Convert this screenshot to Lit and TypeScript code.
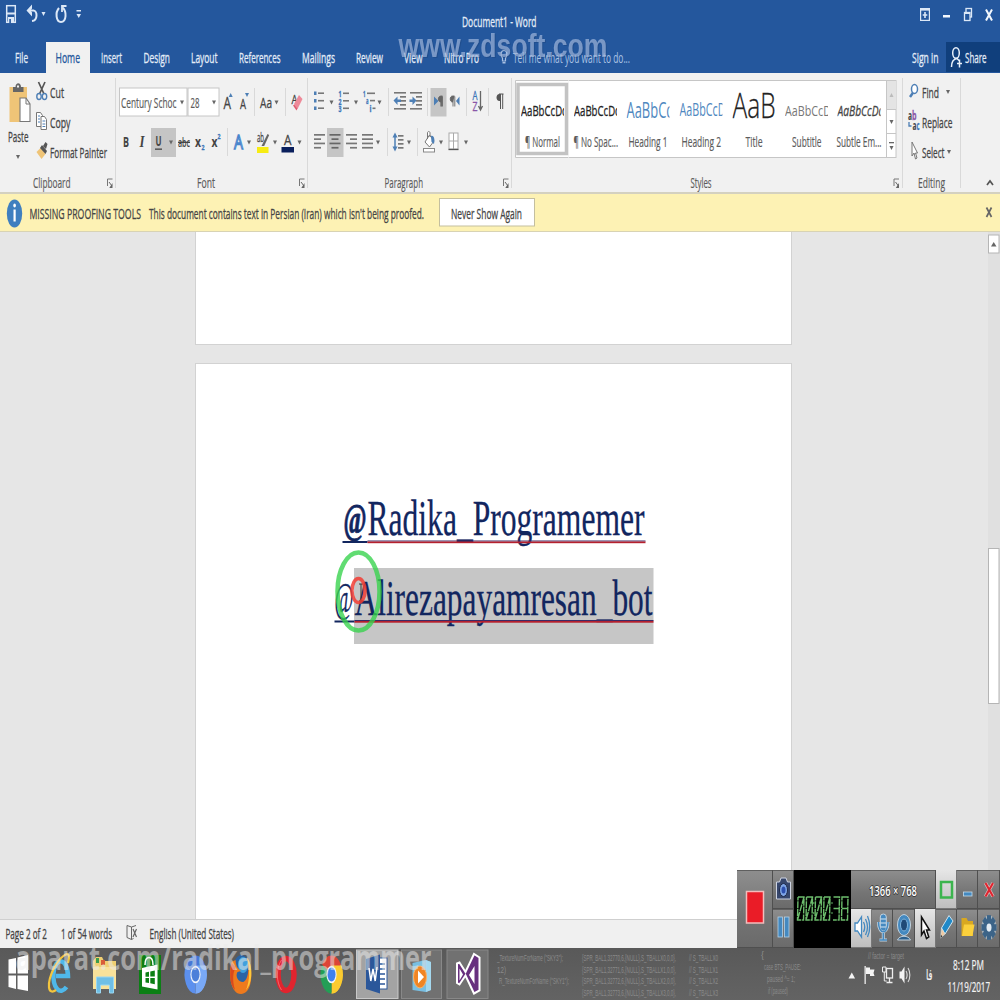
import { LitElement, html, svg, css } from "lit";
import { customElement } from "lit/decorators.js";

/* A cell spans x0..x1 / y0..y1 in window units; cells placed side by side form a row. */
const cell = (x0: number, x1: number, y0: number, y1: number, body: unknown, cls = "") =>
  html`<svg class=${cls} width=${x1 - x0} height=${y1 - y0} viewBox="${x0} ${y0} ${x1 - x0} ${y1 - y0}">${body}</svg>`;

/* Condensed text: starts at x, sits on baseline y, fills width w. */
const tx = (s: string, x: number, y: number, w: number, size = 15, cls = "") =>
  svg`<text class=${cls} x=${x} y=${y} font-size=${size} textLength=${w} lengthAdjust="spacingAndGlyphs">${s}</text>`;

const P = (d: string, fill = "none", stroke = "none", sw = 1) =>
  svg`<path d=${d} fill=${fill} stroke=${stroke} stroke-width=${sw}/>`;
const R = (x: number, y: number, w: number, h: number, fill: string, stroke = "none", sw = 1) =>
  svg`<rect x=${x} y=${y} width=${w} height=${h} fill=${fill} stroke=${stroke} stroke-width=${sw}/>`;
const drop = (x: number, y: number, c = "#666") => P(`M${x - 2} ${y - 2}h4l-2 4z`, c);
const vsep = (x: number, y0: number, y1: number) => R(x, y0, 1, y1 - y0, "#d9d9d9");
const lines = (x: number, y: number, ws: number[], offs: number[] = [], c = "#777", step = 4.4) =>
  ws.map((w, i) => R(x + (offs[i] ?? 0), y + i * step, w, 1.7, c));
const launcher = (x: number, y: number) =>
  svg`${P(`M${x + .5} ${y + 7}v-7h5`, "none", "#777", 1)}${P(`M${x + 2} ${y + 3}l3 4`, "none", "#666", 1)}${P(`M${x + 5.5} ${y + 4}v5h-3.2z`, "#666")}`;

const tabs: [string, number, number, number, number][] = [
  ["File", 0, 46, 15, 13], ["Home", 46, 90, 55.5, 24.5], ["Insert", 90, 133, 101, 21],
  ["Design", 133, 181, 143.5, 26.5], ["Layout", 181, 227, 191, 26.5], ["References", 227, 292, 239, 41.5],
  ["Mailings", 292, 345, 302, 33], ["Review", 345, 394, 356, 27], ["View", 394, 433, 404, 18.5],
  ["Nitro Pro", 433, 490, 444, 35],
];

/* label, label x/width, sample, sample x/width/baseline/size, class */
const styleItems: [string, number, number, string, number, number, number, number, string][] = [
  ["¶ Normal", 525, 35, "AaBbCcDd", 521, 47, 115.5, 15, "blk"],
  ["¶ No Spac...", 573, 44.5, "AaBbCcDd", 573.5, 47, 115.5, 15, "blk"],
  ["Heading 1", 628, 39, "AaBbCc", 626, 46, 118, 21, "hd"],
  ["Heading 2", 681, 39.5, "AaBbCcD", 679, 46, 116, 18, "hd"],
  ["Title", 745, 17, "AaB", 732, 43, 118, 35, "ttl"],
  ["Subtitle", 791.5, 29.5, "AaBbCcD", 784.5, 46, 116, 15, "sub"],
  ["Subtle Em...", 836, 45, "AaBbCcDd", 837, 47, 116, 15, "emp"],
];

@customElement("word-titlebar")
class WordTitlebar extends LitElement {
  static styles = css`
    :host { display: block; background: #24579d; height: 73px; }
    svg { display: block; flex: none; overflow: visible; }
    text { font-family: "Open Sans", "Noto Sans", sans-serif; fill: #e4edf8; stroke: #e4edf8; stroke-width: .3px; }
    .row { display: flex; }
    .push { margin-left: auto; }
    .active { background: #f1f1f1; }
    .active text { fill: #24579d; stroke: #24579d; }
    .dim { fill: #a9c1e3; stroke: none; }
  `;
  render() {
    return html`
      <div class="row">
        ${cell(0, 22, 0, 42, svg`${R(6.7, 5.7, 8.6, 16.6, "none", "#dce8f7", 1.5)}${R(7, 12.5, 8, 2, "#dce8f7")}${R(8, 17, 6, 6, "#dce8f7")}${R(9.3, 19, 1.6, 4, "#24579d")}`)}
        ${cell(22, 50, 0, 42, svg`${P("M30 10.500H33.500C37.500 11 38 20.500 32 21", "none", "#dce8f7", 2)}${P("M26.500 10.500l5.500-6v4l-1.500 2 1.500 2v4z", "#dce8f7")}${drop(43.5, 14, "#dce8f7")}`)}
        ${cell(50, 72, 0, 42, svg`${P("M59 8C55 12.500 56 22 61 22C66.500 22 67 11.500 62.500 7.5", "none", "#dce8f7", 2)}${P("M66.500 6H62v6", "none", "#dce8f7", 1.8)}`)}
        ${cell(72, 440, 0, 42, svg`${R(76.5, 10, 4.5, 1.5, "#dce8f7")}${P("M76.500 14h4.500l-2.250 4z", "#dce8f7")}`)}
        ${cell(440, 560, 0, 42, tx("Document1 - Word", 462, 27, 74.5, 14.5))}
        ${cell(910, 935, 0, 42, svg`${R(920.6, 8.6, 8.8, 11.800, "none", "#dce8f7", 1.2)}${R(920.6, 8.6, 8.8, 2, "#dce8f7")}${P("M925 12v6M922.700 15h4.600", "none", "#dce8f7", 1.6)}`, "push")}
        ${cell(935, 955, 0, 42, R(943, 15, 7, 2.5, "#f2f7fd"))}
        ${cell(955, 978, 0, 42, svg`${R(966, 8.500, 5.500, 8.500, "none", "#dce8f7", 1.3)}${R(964.500, 12.500, 5.500, 8, "#24579d", "#dce8f7", 1.3)}${R(964.500, 12, 5.500, 2, "#dce8f7")}`)}
        ${cell(978, 1000, 0, 42, P("M986 9.500l6 11M992 9.500l-6 11", "none", "#f2f7fd", 2))}
      </div>
      <div class="row">
        ${tabs.map(([s, a, b, x, w]) => cell(a, b, 42, 73, tx(s, x, 62.5, w), s === "Home" ? "active" : ""))}
        ${cell(490, 650, 42, 73, svg`${P("M502.500 58C500 55 501 50.500 504 50.500S508 55 505.500 58V61h-3z", "none", "#a9c1e3", 1.2)}${R(502.500, 62, 3, 1.5, "#a9c1e3")}${tx("Tell me what you want to do...", 513, 62.5, 117, 14.5, "dim")}`)}
        ${cell(900, 946, 42, 73, tx("Sign in", 912, 62.5, 26.5), "push")}
        ${cell(946, 1000, 42, 73, svg`${R(946, 42, 54, 30, "#103f7c")}<ellipse cx="956" cy="53" rx="3.300" ry="5.300" fill="none" stroke="#e8f0fa" stroke-width="1.500"/>${P("M951.500 67C951.500 61 953.500 59 957 58.500L959.500 61M959.500 59.500v8M957 63.500h5", "none", "#e8f0fa", 1.5)}${tx("Share", 965, 62.5, 21.5)}`)}
      </div>`;
  }
}

@customElement("word-ribbon")
class WordRibbon extends LitElement {
  static styles = css`
    :host { display: flex; box-sizing: border-box; height: 121px; background: #f1f1f1; border-bottom: 2px solid #d4d1c0; }
    svg { display: block; flex: none; overflow: visible; }
    .clip { overflow: hidden; }
    text { font-family: "Open Sans", "Noto Sans", sans-serif; fill: #444; stroke: #444; stroke-width: .3px; }
    .group { display: flex; flex-direction: column; flex: none; }
    .row { display: flex; }
    .foot { fill: #5c5c5c; stroke: #5c5c5c; stroke-width: .2px; }
    .blk { fill: #222; stroke: #222; }
    .hd { fill: #4f88c0; stroke: none; }
    .ttl { fill: #222; font-weight: 300; stroke: #222; }
    .sub { fill: #777; stroke: none; }
    .emp { fill: #444; font-style: italic; }
    .b { font-weight: 700; stroke: none; }
    .serif { font-family: "Liberation Serif", serif; font-style: italic; font-weight: 700; stroke: none; }
    .blue { fill: #3a75b8; stroke: #3a75b8; }
    .purple { fill: #8a57a8; stroke: #8a57a8; }
    .outline { fill: #fff; stroke: #4a86cc; stroke-width: 1.3px; }
    .strike { text-decoration: line-through; font-weight: 600; }
  `;
  foot(x0: number, x1: number, s: string, x: number, w: number, lx?: number) {
    return cell(x0, x1, 167, 192, svg`${tx(s, x, 187.5, w, 14.5, "foot")}${lx ? launcher(lx, 179) : ""}${vsep(x1 - 1, 167, 188)}`);
  }
  render() {
    const clip = "#4d7fb5";
    return html`
      <div class="group">
        <div class="row">
          ${cell(0, 34, 73, 167, svg`
            ${R(9.500, 87, 17.500, 35, "#efc477")}${P("M13 92v-5h2.500c0-5 5.500-5 5.500 0H23.500v5z", "#666")}${R(17, 85.500, 2, 2, "#f1f1f1")}
            ${P("M20 98h6l4 6v17.500H20z", "#fff", "#777", 1.1)}${P("M26 98v6h4", "none", "#777", 1)}
            ${tx("Paste", 8, 142, 20.5)}${drop(18, 157)}`)}
          <div class="group">
            ${cell(34, 116, 73, 107, svg`${P("M38.500 82l5.500 12M45 82l-5.500 12", "none", "#555", 1.7)}<ellipse cx="39" cy="96.500" rx="2.200" ry="3" fill="none" stroke=${clip} stroke-width="1.400"/><ellipse cx="44.500" cy="96.500" rx="2.200" ry="3" fill="none" stroke=${clip} stroke-width="1.400"/>${tx("Cut", 50, 97.5, 14)}${vsep(115, 78, 107)}`)}
            ${cell(34, 116, 107, 137, svg`${P("M36.500 112.500h4l2 3v11h-6z", "#fff", "#777")}${P("M41 116.500h3.500l2 3v10h-5.500z", "#fff", "#777")}${P("M38 116h2M38 119h2M38 122h2M42.500 121h2.800M42.500 124h2.800M42.500 126.500h2.800", "none", clip)}${tx("Copy", 50, 127.5, 20.5)}${vsep(115, 107, 137)}`)}
            ${cell(34, 116, 137, 167, svg`${P("M36.500 152l4-4 5 6-4 5z", "#efc477")}${P("M40 148l2-3 5 6-1.500 3zM43 146l2.500-4 2 2-1.500 5z", "#555")}${tx("Format Painter", 50, 157.5, 57)}${vsep(115, 137, 167)}`)}
          </div>
        </div>
        ${this.foot(0, 116, "Clipboard", 33, 37.5, 107)}
      </div>

      <div class="group">
        <div class="row">
          ${cell(116, 187.5, 73, 122, svg`${R(119.500, 88, 67.500, 28, "#fff", "#c6c6c6")}${tx("Century Schoc", 121, 108, 55.5, 15, "foot")}${drop(182, 102.500)}`)}
          ${cell(187.5, 221, 73, 122, svg`${R(187.500, 88, 31, 28, "#fff", "#c6c6c6")}${tx("28", 190, 108, 9, 15, "foot")}${drop(213.500, 102.500)}`)}
          ${cell(221, 237, 73, 122, svg`${tx("A", 223.500, 109, 7.5, 17)}${P("M228.700 97l2-4 2 4z", clip)}`)}
          ${cell(237, 256, 73, 122, svg`${tx("A", 240, 109, 6, 14)}${P("M245 93l2 4 2-4z", clip)}${vsep(254, 88, 116)}`)}
          ${cell(256, 287, 73, 122, svg`${tx("Aa", 260, 107.500, 12, 15)}${drop(276.500, 102.500)}${vsep(285, 88, 116)}`)}
          ${cell(287, 308, 73, 122, svg`${tx("A", 291.500, 104, 6, 13)}${P("M294 104l5-9 3.500 4-5 10z", "#ee8a99")}${P("M293 105.500l3.500 5 1-2-3.300-4z", "#e05c70")}${vsep(307, 78, 122)}`)}
        </div>
        <div class="row">
          ${cell(116, 134, 122, 167, tx("B", 123, 147, 6, 15, "b"))}
          ${cell(134, 150, 122, 167, tx("I", 139.500, 147, 5, 16, "serif"))}
          ${cell(150, 177, 122, 167, svg`${R(151, 128, 25, 29, "#c5c5c5")}${tx("U", 155.500, 146, 6, 14, "b")}${R(155, 148.500, 7, 1.3, "#444")}${drop(171, 142.500)}`)}
          ${cell(177, 193, 122, 167, tx("abc", 178, 147, 12, 13, "b strike"))}
          ${cell(193, 209, 122, 167, svg`${tx("x", 195, 147, 6, 15, "b")}${tx("2", 201.500, 150, 3, 7, "blue b")}`)}
          ${cell(209, 229, 122, 167, svg`${tx("x", 211.500, 147, 6, 15, "b")}${tx("2", 217.500, 139, 3, 7, "blue b")}${vsep(227, 128, 156)}`)}
          ${cell(229, 254, 122, 167, svg`${tx("A", 234, 149, 9, 20, "outline")}${drop(249, 142.500)}`)}
          ${cell(254, 279, 122, 167, svg`${tx("ab", 257, 142, 7, 13)}${P("M261.500 146l6-12 1.700 1-5 11z", "#666")}${R(257, 147, 11.500, 6, "#f7ec13")}${drop(275, 142.500)}`)}
          ${cell(279, 308, 122, 167, svg`${tx("A", 284, 145, 7.500, 15)}${R(281.500, 147, 12.500, 5.500, "#0a1f5c")}${drop(299.500, 142.500)}${vsep(307, 122, 167)}`)}
        </div>
        ${this.foot(116, 308, "Font", 197, 18, 299)}
      </div>

      <div class="group">
        <div class="row">
          ${cell(308, 337, 73, 122, svg`${[91.500, 99, 106.500].map((y) => svg`${R(314, y, 2.500, 3.500, clip)}${R(318, y + .9, 6, 1.600, "#777")}`)}${drop(331.500, 102.500)}`)}
          ${cell(337, 361, 73, 122, svg`${["1", "2", "3"].map((n, i) => svg`${tx(n, 338.500, 97 + i * 7.500, 3, 8, "blue b")}${R(343, 92.500 + i * 7.500, 6, 1.600, "#777")}`)}${drop(356, 102.500)}`)}
          ${cell(361, 390, 73, 122, svg`${tx("1", 363, 97, 2.500, 8, "blue b")}${R(367, 92.500, 8, 1.600, "#777")}${tx("a", 366, 104, 2.500, 9, "blue b")}${R(370, 99.800, 5, 1.600, "#777")}${tx("i", 369.500, 112, 2, 9, "blue b")}${R(372.500, 107.500, 3, 1.600, "#777")}${drop(379.500, 102.500)}${vsep(388, 88, 116)}`)}
          ${cell(390, 408, 73, 122, svg`${R(394, 92, 12, 1.600, "#777")}${lines(400, 96, [6, 6, 6], [], "#777", 4)}${R(394, 108, 12, 1.600, "#777")}${P("M393.500 100.500l4-4v3h3.500v2.500h-3.500v3z", clip)}`)}
          ${cell(408, 428, 73, 122, svg`${R(410, 92, 12, 1.600, "#777")}${lines(416, 96, [6, 6, 6], [], "#777", 4)}${R(410, 108, 12, 1.600, "#777")}${P("M416.500 100.500l-4-4v3h-3v2.500h3v3z", clip)}${vsep(427, 88, 116)}`)}
          ${cell(428, 447, 73, 122, svg`${R(430.500, 88, 16, 28.500, "#c5c5c5")}${P("M434 96.500l4.500 4.500-4.500 4.500z", clip)}${P("M442.500 96h-1.500c-3.500 0-3.500 6 0 6h.5v4.500M440.800 96.500v10M442.500 96.500v10", "#666", "#666", .9)}`)}
          ${cell(447, 467, 73, 122, svg`${P("M459.500 96.500l-3.500 4.500 3.500 4.500z", clip)}${P("M454.500 96h-2c-3 0-3 6 0 6h.5M453 96.500v10M454.800 96.500v10", "#666", "#666", .9)}${vsep(466, 88, 116)}`)}
          ${cell(467, 490, 73, 122, svg`${tx("A", 472.500, 100, 5, 12, "blue")}${tx("Z", 472.500, 111, 5, 12, "purple")}${P("M480.500 91v18M478.500 106l2 4 2-4", "none", "#666", 1.3)}${vsep(488, 88, 116)}`)}
          ${cell(490, 512, 73, 122, svg`${P("M500.500 94h-1c-4 0-4 7 0 7h1z", "#555")}${P("M500.500 94v15M502.700 94v15M499 94h4.500", "none", "#555", 1)}${vsep(511, 78, 122)}`)}
        </div>
        <div class="row">
          ${cell(308, 327, 122, 167, lines(314, 134, [11, 7, 11, 7], [], "#777", 4.300))}
          ${cell(327, 344, 122, 167, svg`${R(327, 128, 16.500, 29, "#c5c5c5")}${lines(329.500, 134, [11, 7, 11, 7], [0, 2, 0, 2], "#666", 4.300)}`)}
          ${cell(344, 360, 122, 167, lines(346, 134, [11, 7, 11, 7], [0, 4, 0, 4], "#777", 4.300))}
          ${cell(360, 389, 122, 167, svg`${lines(362, 134, [11, 11, 11, 11], [], "#777", 4.300)}${drop(378, 142.500)}${vsep(387, 128, 156)}`)}
          ${cell(389, 419, 122, 167, svg`${P("M395 135v14", "none", clip, 1.500)}${P("M392.500 137.500l2.500-5 2.500 5zM392.500 146.500l2.500 5 2.500-5z", clip)}${lines(398, 135, [5.500, 5.500, 5.500, 5.500], [], "#777", 4)}${drop(409, 142.500)}${vsep(417, 128, 156)}`)}
          ${cell(419, 446, 122, 167, svg`${P("M425 142l4.500-7 4.500 6-4.500 6zM427.500 139v-6c0-2 2.500-2 2.500 0v4", "#fff", "#777", 1)}${P("M431 136c3-1 4 3 3 8l-2.500-2z", clip)}${R(423.500, 148.500, 11, 3.500, "#fff", "#888")}${drop(441, 142.500)}`)}
          ${cell(446, 512, 122, 167, svg`${R(449, 133, 9, 16, "#fff", "#aaa")}${P("M453.500 133v16M449 141h9", "none", "#aaa", 1)}${P("M448.500 149.500h10", "none", "#555", 1.300)}${drop(466, 142.500)}${vsep(511, 122, 167)}`)}
        </div>
        ${this.foot(308, 512, "Paragraph", 384.500, 38.500, 503)}
      </div>

      <div class="group">
        <div class="row">
          ${cell(512, 518, 73, 167, svg`${P("M518 80.500h-2.500v77h2.500", "#fff", "#c6c6c6", 1)}`)}
          ${styleItems.map(([label, lx, lw, smp, sx, sw, sy, sz, cls], i) => {
            const x0 = i ? 568.500 + (i - 1) * 53 : 518;
            const x1 = i === 6 ? 886 : 568.500 + i * 53;
            return cell(x0, x1, 73, 167, svg`
              ${R(x0, 80, x1 - x0, 78, "#fff")}${R(x0, 80, x1 - x0, 1, "#c6c6c6")}${R(x0, 157, x1 - x0, 1, "#c6c6c6")}
              ${i ? "" : R(518, 84.500, 48.500, 69, "#fff", "#c3c3c3", 3.500)}
              <svg class="clip" x=${sx} y="82" width="43" height="45" viewBox="${sx} 82 43 45">${tx(smp, sx, sy, sw, sz, cls)}</svg>
              ${tx(label, lx, 147, lw, 14.500, "foot")}`);
          })}
          ${cell(886, 902, 73, 167, svg`${R(886.500, 80.500, 9.500, 77, "#fff", "#c6c6c6")}${R(887, 81, 9, 28, "#e4e4e4")}${P("M886.500 109.500h9.500M886.500 133.500h9.500", "none", "#c6c6c6")}${P("M889.500 97l2-4 2 4z", "#bbb")}${drop(891.500, 122)}${R(889, 142, 5, 1.300, "#666")}${drop(891.500, 148)}`)}
        </div>
        ${cell(512, 902.5, 167, 192, svg`${tx("Styles", 690.500, 187.5, 21, 14.5, "foot")}${launcher(893.5, 179)}${vsep(902, 78, 188)}`)}
      </div>

      <div class="group">
        ${cell(902.5, 960.5, 73, 107, svg`${P("M913 92l-3.500 5", "none", clip, 2.500)}<ellipse cx="914" cy="89" rx="3" ry="4.500" fill="#fff" stroke=${clip} stroke-width="1.500"/>${tx("Find", 921.500, 97.500, 17)}${drop(947.500, 92)}${vsep(959.500, 78, 107)}`)}
        ${cell(902.5, 960.5, 107, 137, svg`${tx("a", 907.500, 120, 4, 12, "b")}${tx("b", 911.500, 120, 4.500, 12, "purple b")}${tx("a", 912, 130, 4, 12, "b")}${tx("c", 916, 130, 3, 12, "blue b")}${P("M908.500 122v4h2.500", "none", clip, 1.300)}${tx("Replace", 921.500, 127.500, 30.500)}${vsep(959.500, 107, 137)}`)}
        ${cell(902.5, 960.5, 137, 167, svg`${P("M911.500 142v14l2-3 1.500 6 1.500-1-1.500-5h2z", "#fff", "#777", 1)}${tx("Select", 921.500, 157.500, 22.500)}${drop(948.500, 152)}${vsep(959.500, 137, 167)}`)}
        ${this.foot(902.500, 960.500, "Editing", 917.500, 27)}
      </div>
      ${cell(960.5, 1000, 73, 192, P("M986.500 185l3-4 3 4", "none", "#555", 1.700))}
    `;
  }
}

@customElement("word-notice")
class WordNotice extends LitElement {
  static styles = css`
    :host { display: flex; box-sizing: border-box; height: 38px; background: #fdf2b4; border-bottom: 1px solid #d8d3b4; }
    svg { display: block; flex: none; overflow: visible; }
    text { font-family: "Open Sans", "Noto Sans", sans-serif; fill: #444; stroke: #444; stroke-width: .3px; }
    .push { margin-left: auto; }
  `;
  render() {
    return html`
      ${cell(0, 26, 194, 231, svg`<ellipse cx="14.500" cy="213.500" rx="7.700" ry="14" fill="#3f7fbf"/>${R(13.500, 209.500, 2.200, 12, "#fff")}<ellipse cx="14.600" cy="205.500" rx="1.300" ry="1.900" fill="#fff"/>`)}
      ${cell(26, 145, 194, 231, tx("MISSING PROOFING TOOLS", 29.500, 218.500, 111.500))}
      ${cell(145, 435, 194, 231, tx("This document contains text in Persian (Iran) which isn't being proofed.", 149, 218.500, 275))}
      ${cell(435, 540, 194, 231, svg`${R(439.500, 198.500, 95, 27.500, "#fff", "#c4bf9f")}${tx("Never Show Again", 451, 218.500, 71)}`)}
      ${cell(970, 1000, 194, 231, P("M986.500 207.500l5 9.500M991.500 207.500l-5 9.500", "none", "#666", 1.700), "push")}
    `;
  }
}

@customElement("word-document")
class WordDocument extends LitElement {
  static styles = css`
    :host { display: flex; height: 687px; background: #e6e6e6; position: relative; overflow: hidden; }
    svg { display: block; flex: none; overflow: visible; }
    text { font-family: "Liberation Serif", serif; fill: #12265f; stroke: #12265f; stroke-width: .3px; }
    .at { font-weight: 700; stroke-width: .8px; }
    .pages { flex: 1; display: flex; flex-direction: column; gap: 18px; padding-left: 194.500px; }
    .page { box-sizing: border-box; flex: none; width: 597.500px; background: #fff; border: 1px solid #d2d2d2; }
    .first { height: 113px; border-top: 0; }
    .second { height: 580px; padding-top: 121px; }
    .bar { display: flex; flex-direction: column; width: 12px; background: #e0e0e0; }
    .ring { position: absolute; left: 330px; top: 312px; }
  `;
  render() {
    return html`
      <div class="pages">
        <div class="page first"></div>
        <div class="page second">
          ${cell(195.5, 790, 485, 560, svg`
            ${tx("@", 343, 533, 23, 42, "at")}${tx("Radika_Programemer", 367, 535, 277, 51.500)}
            ${R(342, 541, 25, 2, "#12265f")}${R(367, 540.500, 278, 1, "#3a2b66")}${R(367, 541.500, 278, 1.700, "#b5202e")}`)}
          ${cell(195.5, 790, 560, 650, svg`
            ${R(353.500, 568, 299.500, 76, "#c6c6c6")}
            ${tx("@", 334, 612, 19, 43)}${tx("Alirezapayamresan_bot", 354, 614.500, 298, 51.500)}
            ${R(334, 620.500, 20, 2, "#12265f")}${R(354, 620, 299, 1, "#3a2b66")}${R(354, 621, 299, 1.700, "#b5202e")}`)}
        </div>
      </div>
      <div class="bar">
        ${cell(988, 1000, 232, 548, svg`${R(988.500, 235, 10.500, 18, "#fff", "#b5b5b5")}${P("M991 246.500l2.700-4.500 2.800 4.500z", "#666")}`)}
        ${cell(988, 1000, 548, 705, R(988.500, 548.500, 10.500, 155, "#fff", "#b5b5b5"))}
      </div>
      <div class="ring">
        ${cell(330, 390, 544, 640, svg`
          <ellipse cx="358.500" cy="591.500" rx="21" ry="39" fill="none" stroke="#35d24a" stroke-width="4.500" opacity=".78"/>
          ${P("M361 584v17M359 584h4M359 601h4", "none", "#333", 1)}
          <ellipse cx="358.500" cy="590.500" rx="6.500" ry="12" fill="none" stroke="#f23c32" stroke-width="3.500" opacity=".85"/>`)}
      </div>
    `;
  }
}

@customElement("word-status")
class WordStatus extends LitElement {
  static styles = css`
    :host { display: flex; box-sizing: border-box; height: 29px; background: #f0f0f0; border-top: 1px solid #cfcfcf; }
    svg { display: block; flex: none; overflow: visible; }
    text { font-family: "Open Sans", "Noto Sans", sans-serif; fill: #444; stroke: #444; stroke-width: .3px; }
  `;
  render() {
    return html`
      ${cell(0, 54, 920, 948, tx("Page 2 of 2", 5.500, 938.500, 41.500, 14))}
      ${cell(54, 120, 920, 948, tx("1 of 54 words", 61, 938.500, 51, 14))}
      ${cell(120, 143, 920, 948, svg`${P("M131.500 927l-4.500-1.500v12l4.500 2zM131.500 927l4.500-1.500M131.500 939.500l2-1", "none", "#666", 1)}${P("M133 929l3.500 8M136.500 929l-3.500 8", "none", "#666", 1.200)}`)}
      ${cell(143, 300, 920, 948, tx("English (United States)", 149.500, 938.500, 84.500, 14))}
    `;
  }
}

@customElement("desk-taskbar")
class DeskTaskbar extends LitElement {
  static styles = css`
    :host { display: flex; height: 52px; background: linear-gradient(#595959, #636363); overflow: hidden; }
    svg { display: block; flex: none; overflow: visible; }
    text { font-family: "Open Sans", "Noto Sans", sans-serif; fill: #f4f4f4; stroke: #f4f4f4; stroke-width: .2px; }
    .ar { font-family: "DejaVu Sans", sans-serif; }
    .code { fill: #8b8b8b; stroke: none; font-family: "Liberation Sans", sans-serif; }
  `;
  render() {
    const code = (s: string, x: number, y: number, w: number) => tx(s, x, y, w, 9.5, "code");
    const wheel = (cx: number, a: string, b: string, c: string, core: string) => svg`
      <g transform="translate(${cx} 974.500) scale(.575 1)">
        <path d="M0 0L-16.500-9.500A19 19 0 0 1 16.500-9.500Z" fill=${a}/>
        <path d="M0 0L16.500-9.500A19 19 0 0 1 0 19Z" fill=${b}/>
        <path d="M0 0L0 19A19 19 0 0 1-16.500-9.500Z" fill=${c}/>
        <path d="M0-9H17.500A19 19 0 0 1 0 19L8 4Z" fill=${b}/>
        <circle r="8.800" fill="#f3f6fb"/><circle r="7" fill=${core}/>
      </g>`;
    return html`
      ${cell(0, 38, 948, 1000, svg`${P("M8.500 959.500l7.500-1.500v15.500H8.500zM17.500 957.500l10.500-2.500v18.500H17.500zM8.500 975.500H16v13.500l-7.500-2zM17.500 975.500H28v15.500l-10.500-2z", "#fff")}`)}
      ${cell(38, 82, 948, 1000, svg`
        ${P("M66.500 987C60 996 52.500 988 53.500 973C55 957 67.500 957 68 976H56", "none", "#4fb8ea", 4.500)}
        ${P("M56 990C48 996 46 984 54 968C60 957 68 951 69 956C69.500 958 68.500 961 68 963", "none", "#f3c53e", 2.200)}`)}
      ${cell(82, 128, 948, 1000, svg`${P("M93 961l3-4h6l2 4h12v28H93z", "#f0cf72")}${R(96, 958, 3, 5, "#3d9c4e")}${R(101, 960, 4, 5, "#d95d39")}${P("M93 967h23v22H93z", "#f9e29a")}${P("M96.500 993v-16h17v16h-4v-8h-9v8z", "#6fbfe6", "#9ad7f2")}`)}
      ${cell(128, 173, 948, 1000, svg`${R(139, 955, 22, 39, "#0b7f14")}${P("M145 965c0-10 8-10 8 0", "none", "#fff", 1.500)}${P("M142 968l15.500-3.500V989.500L142 986.500z", "#fff")}${P("M145.500 972.500l3.500-.8v5h-3.500zM150.300 971.500l4.500-1v6h-4.500zM145.500 978h3.500v5l-3.500-.6zM150.300 978h4.500v6.200l-4.500-.9z", "#0b7f14")}`)}
      ${cell(173, 218, 948, 1000, svg`${wheel(195.500, "#4678d6", "#79a9f7", "#5c90ee", "#4c7fd9")}`)}
      ${cell(218, 264, 948, 1000, svg`<ellipse cx="241.500" cy="972" rx="9" ry="17" fill="#2b64a5"/><ellipse cx="243" cy="965" rx="5" ry="8" fill="#3fa0dc"/>
        ${P("M231.500 962C228 975 231 994 241 994C250 994 253 980 250.500 965C249.500 961 248.500 959 247 958C250 968 248 981 243 982C238 982 235 976 237.500 972L241 971C237 968 236 966 235.500 960z", "#ee7a1d")}${P("M247 958C252.500 963 253.500 983 246 990C250 981 250 968 247 958z", "#ffc83a")}${P("M231.500 963C229 975 230 985 235 990C232 980 233 971 236 967z", "#d94a1d")}`)}
      ${cell(264, 309, 948, 1000, svg`<ellipse cx="286" cy="974.500" rx="8" ry="16" fill="none" stroke="#e0242e" stroke-width="5.500"/>${P("M281.500 960C276 968 276 982 281.500 990", "none", "#f4666b", 1)}`)}
      ${cell(309, 355, 948, 1000, svg`${wheel(331.500, "#dc4437", "#fbcb2f", "#239e56", "#3f80ee")}`)}
      ${cell(355, 400, 948, 1000, svg`${R(356.500, 950, 41.500, 48.500, "#a3a3a3", "#c8c8c8")}${R(376, 958, 11, 31, "#fff", "#2b579a")}${P("M379 964h6M379 969h6M379 974h6M379 979h6M379 984h6", "none", "#2b579a", 1.500)}${P("M366 959l14-4.500v39L366 989z", "#2b579a")}${P("M369 968l1.800 13 2.200-12 2.200 12 1.800-14", "none", "#fff", 1.500)}`)}
      ${cell(400, 445, 948, 1000, svg`${R(401.500, 950, 40, 48.500, "#717171", "#888")}${P("M412.500 963l13-3 5.500 2v28l-5 2-13.500-2z", "#79bfe2")}${P("M426 960l5 2v28l-5 2z", "#a4d8ef")}<ellipse cx="420" cy="977" rx="6.500" ry="11" fill="#f08523" stroke="#f8b26a"/>${P("M418 970.500l6 6.500-6 6.500z", "#fff")}`)}
      ${cell(445, 495, 948, 1000, svg`${R(447, 950, 41, 48.500, "#717171", "#888")}
        ${P("M457 963.500l2.500-1 6 9.500 8.500-18 5.500 3.500v33l-5.500 3-8.500-18-6 9-2.500-1.500z", "#68307f", "#fff", 2)}${P("M459.500 968.500v12l3.500-6zM474.500 966v18l-5.500-9z", "#fff")}`)}
      ${cell(495, 840, 948, 1000, svg`
        ${code('_TextureNumForName ("SKY3");', 497, 961, 66)}${code("12)", 497, 972.5, 9)}${code('R_TextureNumForName ("SKY1");', 499, 984, 70)}
        ${[0, 1, 2, 3].map((i) => svg`${code(`{SPR_BAL1,3277${i},6,{NULL},S_TBALLX${i},0,0},`, 582, 961 + i * 11.500, 94)}${code(`// S_TBALLX${i}`, 689, 961 + i * 11.500, 29)}`)}
        ${code("{", 761, 958, 3)}${code("case BTS_PAUSE:", 764, 970, 37)}${code("paused ^= 1;", 767, 982, 28)}${code("if (paused)", 768, 993.5, 20)}`)}
      ${cell(840, 860, 948, 1000, P("M848.500 978.500l3.300-6 3.300 6z", "#f4f4f4"))}
      ${cell(860, 878, 948, 1000, svg`${code("// factor = target", 868, 959, 36)}${R(864.500, 966, 1.300, 18, "#eee")}${P("M866 967.500h4v2h4.500l-1 3.500 1 3h-4.500v-2h-4z", "#f4f4f4")}`)}
      ${cell(878, 896, 948, 1000, svg`${R(886.500, 968.500, 6, 9.500, "none", "#eee", 1.300)}${P("M889.500 978v4M886.500 982.500h6", "none", "#eee", 1.300)}${P("M882.500 967h3.500v5h-3.500zM884.300 972v9h2.500", "none", "#eee", 1)}`)}
      ${cell(896, 915, 948, 1000, svg`${P("M899.500 971.500h2l3-5v17l-3-5h-2z", "#f4f4f4")}${P("M906 971c1.500 2 1.500 6 0 8M908 968c2.500 4 2.500 10 0 14", "none", "#ddd", 1.100)}`)}
      ${cell(915, 940, 948, 1000, tx("فا", 926, 980, 6.500, 15, "ar"))}
      ${cell(940, 1000, 948, 1000, svg`${tx("8:12 PM", 953, 970, 31, 14)}${tx("11/19/2017", 947.500, 991.500, 42.500, 14)}`)}
    `;
  }
}

@customElement("screen-recorder")
class ScreenRecorder extends LitElement {
  static styles = css`
    :host { display: flex; width: 263px; height: 78px; background: #6e6e6e; box-sizing: border-box; }
    svg { display: block; flex: none; overflow: visible; }
    text { font-family: "Open Sans", "Noto Sans", sans-serif; }
    .col { display: flex; flex-direction: column; }
    .row { display: flex; }
    .size { fill: #fff; stroke: #333; stroke-width: 1.6px; paint-order: stroke; font-weight: 600; }
    .metal { background: linear-gradient(#8e8e8e, #747474 60%, #6a6a6a); box-shadow: inset -1px -1px #4f4f4f, inset 0 1px #5f5f5f; }
    .lit { background: linear-gradient(#e6e6e6, #bdbdbd); box-shadow: inset -1px -1px #777; }
    .lcd { background: #000; }
  `;
  digit(x: number, n: string) {
    const seg: Record<string, string> = {
      "0": "M0 0H6L5.500 23H-.5L0 0M6 0L-.5 23",
      "3": "M0 0H6L5.500 23H-.5M0 11.500H5.500",
      "8": "M0 0H6L5.500 23H-.5ZM0 11.500H5.500",
    };
    return svg`<path transform="translate(${x} 897)" d=${seg[n]} fill="none" stroke="#6cbc6c" stroke-width="1.400" stroke-dasharray="7 .8"/>`;
  }
  render() {
    const g = "#4489c0";
    const halo = "#c3d3df";
    const teeth = [0, 45, 90, 135].map((a) => svg`<rect x="-2" y="-7.500" width="4" height="15" transform="rotate(${a})" fill="#3c6488"/>`);
    return html`
      ${cell(737, 773, 870, 948, R(746.500, 891.500, 17, 31.500, "#ea1c27", "#f3bcbc", 1.500), "metal")}
      <div class="col">
        ${cell(773, 794, 870, 909, svg`${P("M776.500 882h3l1.500-4h5l1.500 4h3v17h-14z", "#36466c", "#cdd3e2", 1)}<ellipse cx="783.500" cy="890" rx="4" ry="6.500" fill="#7fa5e6" stroke="#1f2b4a"/><ellipse cx="783.500" cy="890" rx="2" ry="3.500" fill="#2c4fae"/>`, "metal")}
        ${cell(773, 794, 909, 948, svg`${R(778, 917, 4.500, 20, g, "#b5d2e8", .8)}${R(784.500, 917, 4.500, 20, g, "#b5d2e8", .8)}`, "metal")}
      </div>
      ${cell(794, 851, 870, 948, svg`
        ${[["0", 798], ["0", 806.500], ["0", 815.500], ["0", 824], ["3", 833.500], ["8", 842]].map(([n, x]) => this.digit(x as number, n as string))}
        ${R(813.300, 902, 1, 2, "#5fae62")}${R(813.300, 912, 1, 2, "#5fae62")}${R(831.500, 902, 1, 2, "#5fae62")}${R(831.500, 912, 1, 2, "#5fae62")}`, "lcd")}
      <div class="col">
        <div class="row">
          ${cell(851, 936, 870, 909, tx("1366 × 768", 869, 895.500, 48, 14.500, "size"), "metal")}
          ${cell(936, 957, 870, 909, R(941, 882, 11, 15.500, "none", "#3cb44e", 2.500), "lit")}
          ${cell(957, 978, 870, 909, R(963.500, 892, 8.500, 4, g, "#c4dbec", .8), "metal")}
          ${cell(978, 1000, 870, 909, svg`${P("M985.500 883l7.500 13.500M993 883l-7.500 13.500", "none", "#d9b8bb", 3.500)}${P("M985.500 883l7.500 13.500M993 883l-7.500 13.500", "none", "#e0242e", 2)}`, "metal")}
        </div>
        <div class="row">
          ${cell(851, 872, 909, 948, svg`${P("M855 923h2.500l4-6v20l-4-6H855z", "#fff", g, 1.300)}${P("M863.500 922c1.500 3 1.500 7 0 10M865.500 919c2.500 5 2.500 11 0 16M867.500 916c3 7 3 14 0 21", "none", g, 1.300)}`, "lit")}
          ${cell(872, 893, 909, 948, svg`${P("M878.500 922c0 13 9.500 13 9.500 0M883.300 933v7M879.500 940h7.500", "none", halo, 3)}<rect x="880.300" y="914" width="6" height="17" rx="3" fill=${g} stroke=${halo}/>${P("M880.500 919h5.500M880.500 923h5.500M880.500 927h5.500", "none", "#d5e6f2")}${P("M878.500 922c0 13 9.500 13 9.500 0M883.300 933v7M879.500 940h7.500", "none", g, 1.500)}`, "metal")}
          ${cell(893, 915, 909, 948, svg`${P("M897.500 940c2-5 11-5 13 0z", "#2b5f8c", halo)}<ellipse cx="904" cy="925" rx="6.500" ry="10.500" fill=${g} stroke=${halo}/><ellipse cx="904" cy="925" rx="3.500" ry="6" fill="#1f4a76" stroke="#7fb4dc"/>`, "metal")}
          ${cell(915, 936, 909, 948, P("M921.500 917v18l2.500-4 2.500 7.500 2.300-1.500-2.300-7h3z", "#fff", "#111", 1.500), "lit")}
          ${cell(936, 957, 909, 948, svg`${P("M941.500 928l7.500-12.500 4 5.500-8 13z", "#2089c8", "#cfe4f0", 1)}${P("M940.500 938l1-10 3.700 6z", "#f0c9a0", "#cfe4f0", .6)}${P("M940.500 938l.4-3.500 1.400 2z", "#333")}`, "metal")}
          ${cell(957, 978, 909, 948, svg`${P("M961.500 918h5l1.500 3h5v15h-11.500z", "#d9a820")}${P("M962 936l2-11.500h10.500l-2 11.500z", "#fbd03c")}`, "metal")}
          ${cell(978, 1000, 909, 948, svg`<g transform="translate(989 927.500) scale(1 1.650)"><circle r="7.500" fill="#c3d3df" opacity=".6"/>${teeth}<circle r="5.500" fill="#3c6488"/><circle r="2.500" fill="#e3ecf3"/></g>`, "metal")}
        </div>
      </div>
    `;
  }
}

@customElement("app-root")
class AppRoot extends LitElement {
  static styles = css`
    :host { display: flex; flex-direction: column; position: relative; width: 1000px; height: 1000px; overflow: hidden; background: #e6e6e6; }
    :host > * { flex: none; }
    screen-recorder { position: absolute; left: 737px; top: 870px; }
    .mark { position: absolute; display: block; overflow: visible; pointer-events: none; }
    .top { left: 390px; top: 28px; }
    .low { left: 10px; top: 935px; }
    .site { font-family: "Liberation Sans", sans-serif; font-weight: 700; fill: rgba(178, 197, 231, .62); filter: drop-shadow(1px 1.5px 0 rgba(20, 45, 90, .35)); }
    .channel { font-family: "Open Sans", "Noto Sans", sans-serif; font-weight: 700; fill: rgba(235, 235, 235, .5); }
  `;
  render() {
    return html`
      <word-titlebar></word-titlebar>
      <word-ribbon></word-ribbon>
      <word-notice></word-notice>
      <word-document></word-document>
      <word-status></word-status>
      <desk-taskbar></desk-taskbar>
      <screen-recorder></screen-recorder>
      ${cell(390, 620, 28, 68, tx("www.zdsoft.com", 398.500, 57, 209, 33, "site"), "mark top")}
      ${cell(10, 440, 935, 985, tx("aparat.com/radikal_programmer", 15.500, 970, 416, 34, "channel"), "mark low")}
    `;
  }
}
